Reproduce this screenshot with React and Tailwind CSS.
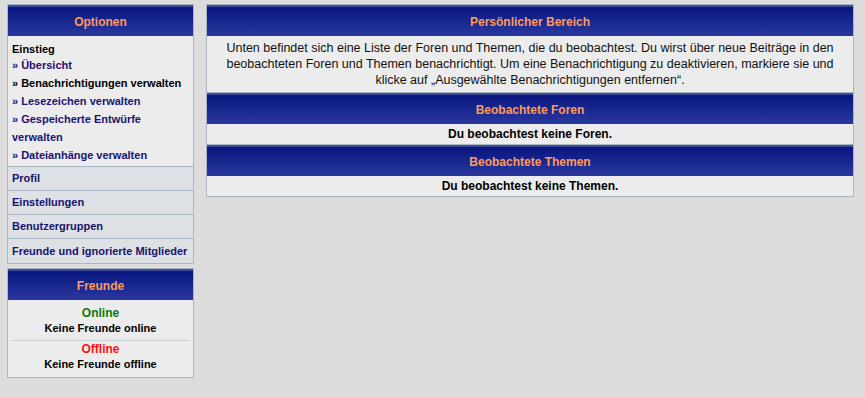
import React from "react";

const font = { fontFamily: '"Liberation Sans", Arial, sans-serif' };

function Header({ children }) {
  return (
    <div className="h-[31px] flex items-center justify-center border-t-[2px] border-[#3b4a9c] bg-gradient-to-b from-[#08137e] to-[#2a389e] text-[12px] font-bold text-[#ff9a5c]">
      {children}
    </div>
  );
}

export default function App() {
  return (
    <div className="min-h-[397px] bg-[#dcdcdc] text-black" style={font}>
      <div className="flex gap-[12px] pl-[7px] pr-[11px] pt-[4px]">
        {/* Left column */}
        <div className="w-[187px] flex flex-col gap-[4px]">
          <div className="border border-[#a8b6c1] bg-[#ececec]">
            <Header>Optionen</Header>
            <div className="h-[131px] px-[4px] pt-[6px] text-[11px] font-bold leading-[18px] border-b border-[#a8b6c1]">
              <div className="leading-[14px]">Einstieg</div>
              <div className="text-[#2b0d6e]">» Übersicht</div>
              <div className="text-black">» Benachrichtigungen verwalten</div>
              <div className="text-[#1a127a]">» Lesezeichen verwalten</div>
              <div className="text-[#1a127a]">» Gespeicherte Entwürfe verwalten</div>
              <div className="text-[#1a127a]">» Dateianhänge verwalten</div>
            </div>
            {["Profil", "Einstellungen", "Benutzergruppen", "Freunde und ignorierte Mitglieder"].map((t, i, a) => (
              <div
                key={t}
                className={
                  "h-[24px] flex items-center px-[4px] bg-[#dde1e6] text-[11px] font-bold text-[#17146e] " +
                  (i < a.length - 1 ? "border-b border-[#a8b6c1]" : "")
                }
              >
                {t}
              </div>
            ))}
          </div>
          <div className="border border-[#a8b6c1] bg-[#ececec]">
            <Header>Freunde</Header>
            <div className="h-[77px] px-[4px] pt-[5px] text-[11px] font-bold text-center">
              <div className="leading-[16px] text-[12px] text-[#0a7a12]">Online</div>
              <div className="leading-[15px] pb-[4px] border-b border-[#c9ced3]">Keine Freunde online</div>
              <div className="leading-[16px] text-[12px] text-[#ff1010]">Offline</div>
              <div className="leading-[15px]">Keine Freunde offline</div>
            </div>
          </div>
        </div>

        {/* Right column */}
        <div className="flex-1 border border-[#a8b6c1] bg-[#ececec] self-start">
          <Header>Persönlicher Bereich</Header>
          <div className="h-[57px] border-b border-[#a8b6c1] px-[10px] pt-[4px] text-center text-[12.5px] leading-[16px] text-[#111]">
            Unten befindet sich eine Liste der Foren und Themen, die du beobachtest. Du wirst über neue Beiträge in den
            beobachteten Foren und Themen benachrichtigt. Um eine Benachrichtigung zu deaktivieren, markiere sie und
            klicke auf „Ausgewählte Benachrichtigungen entfernen“.
          </div>
          <Header>Beobachtete Foren</Header>
          <div className="h-[21px] border-b border-[#a8b6c1] flex items-center justify-center text-[12px] font-bold">
            Du beobachtest keine Foren.
          </div>
          <Header>Beobachtete Themen</Header>
          <div className="h-[20px] flex items-center justify-center text-[12px] font-bold">
            Du beobachtest keine Themen.
          </div>
        </div>
      </div>
    </div>
  );
}
